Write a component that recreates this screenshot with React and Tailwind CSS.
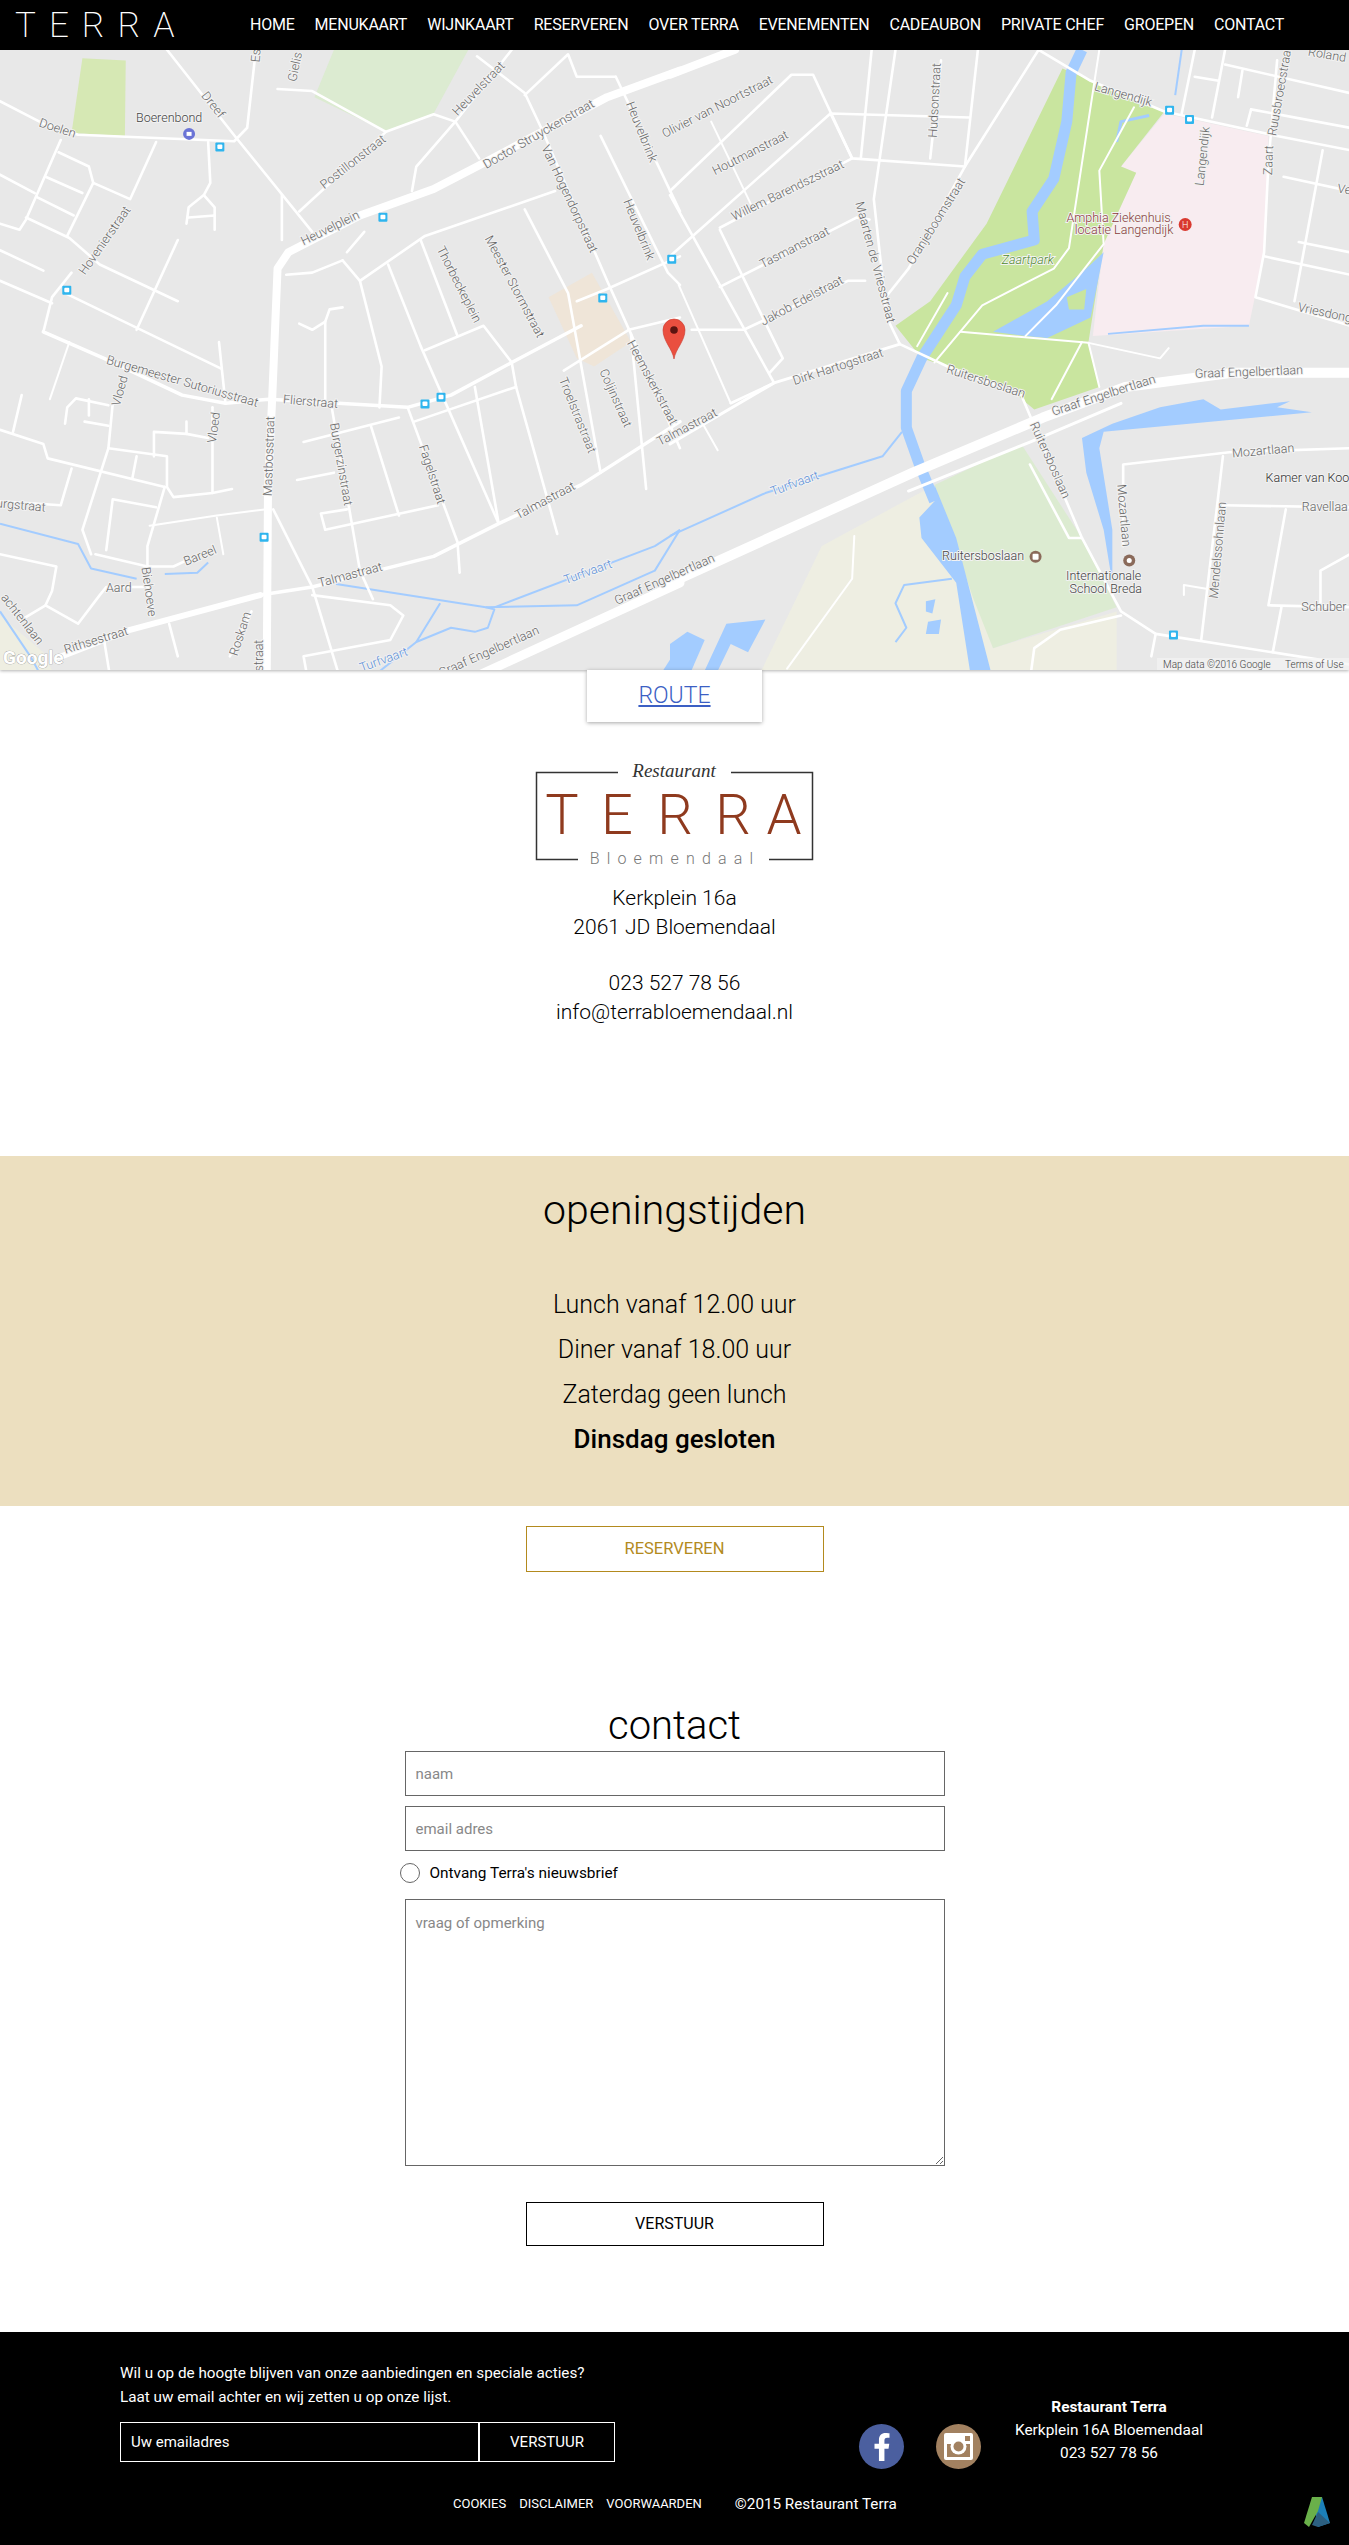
import { FaFacebookF } from "react-icons/fa";

const navItems = ["HOME", "MENUKAART", "WIJNKAART", "RESERVEREN", "OVER TERRA", "EVENEMENTEN", "CADEAUBON", "PRIVATE CHEF", "GROEPEN", "CONTACT"];

// map coordinates are read off two crops, converted to page pixels here
const LEFT = 0;
const RIGHT = 670;
const px = (off, x) => off + x / 2.306;
const py = (y) => y / 2.45 - 10;
const pts = (off, arr) => arr.map(([x, y]) => `${px(off, x)},${py(y)}`).join(" ");

const areas = [
  [LEFT, "#d6e8b4", [[190, 45], [290, 50], [288, 235], [165, 228]]],
  [LEFT, "#dcebd1", [[725, 140], [770, 24], [1080, 24], [1000, 180], [890, 225]]],
  [LEFT, "#efe5d8", [[1265, 630], [1365, 570], [1455, 740], [1370, 800], [1330, 780]]],
  [LEFT, "#eeeee2", [[0, 1410], [100, 1500], [130, 1568], [0, 1568]]],
  [LEFT, "#a3ccff", [[1515, 1568], [1568, 1480], [1568, 1568]]],
  [RIGHT, "#f8ecf0", [[1140, 180], [1380, 235], [1370, 520], [1335, 700], [975, 725], [1000, 500], [1075, 325], [1040, 310]]],
  [RIGHT, "#eeeee2", [[610, 1090], [745, 1490], [1030, 1400], [1030, 1568], [200, 1568], [350, 1240]]],
  [RIGHT, "#dcebd1", [[810, 990], [950, 1220], [1030, 1390], [745, 1490], [700, 1370], [610, 1090]]],
  [RIGHT, "#c9e59f", [[905, 70], [1140, 175], [1040, 310], [1075, 325], [1000, 500], [965, 740], [990, 850], [840, 905], [800, 870], [640, 800], [580, 780], [520, 700], [600, 640], [730, 450]]],
  [RIGHT, "#a3ccff", [[745, 715], [870, 640], [960, 560], [1000, 520], [970, 680], [870, 730], [820, 725]]],
  [RIGHT, "#c9e59f", [[915, 630], [960, 610], [955, 660], [920, 660]]],
  [RIGHT, "#a3ccff", [[950, 975], [1020, 940], [1130, 900], [1230, 880], [1270, 905], [1430, 885], [1400, 900], [1480, 912], [1000, 960], [990, 1000], [1020, 1200], [1020, 1330], [1000, 1200], [960, 1060]]],
  [RIGHT, "#a3ccff", [[610, 1090], [660, 1220], [745, 1568], [695, 1568], [660, 1330], [580, 1220], [575, 1170], [610, 1130]]],
  [RIGHT, "#a3ccff", [[70, 1568], [130, 1430], [220, 1420], [180, 1500], [140, 1480], [100, 1568]]],
  [RIGHT, "#a3ccff", [[0, 1480], [40, 1450], [80, 1470], [40, 1568], [0, 1568]]],
  [RIGHT, "#a3ccff", [[590, 1375], [612, 1370], [605, 1405], [590, 1400]]],
  [RIGHT, "#a3ccff", [[595, 1425], [625, 1420], [620, 1455], [590, 1455]]],
];

const water = [
  [LEFT, 2, [[0, 1185], [180, 1235], [210, 1295], [315, 1320]]],
  [LEFT, 2, [[380, 1308], [455, 1305], [480, 1280]]],
  [LEFT, 2, [[775, 1333], [1120, 1390], [1330, 1385], [1510, 1300], [1568, 1200]]],
  [LEFT, 2, [[1140, 1390], [1510, 1240], [1568, 1200]]],
  [LEFT, 2, [[1120, 1390], [1140, 1395], [1125, 1440], [1095, 1450], [1040, 1440], [960, 1475], [1015, 1380]]],
  [LEFT, 2, [[960, 1475], [850, 1568]]],
  [LEFT, 2, [[0, 1400], [70, 1510], [100, 1568]]],
  [RIGHT, 11, [[950, 24], [925, 80], [915, 200], [885, 340], [835, 420], [840, 490], [720, 525], [680, 580], [660, 650], [580, 780], [545, 860], [545, 950], [575, 1040], [610, 1130]]],
  [RIGHT, 2, [[0, 1215], [220, 1110], [490, 1020], [535, 960]]],
  [RIGHT, 2, [[1010, 720], [1230, 700], [1335, 700]]],
  [RIGHT, 3, [[1030, 250], [1040, 200], [1105, 185]]],
  [RIGHT, 2, [[1180, 24], [1165, 135]]],
  [RIGHT, 2, [[650, 1320], [540, 1335], [520, 1380], [545, 1440], [520, 1475]]],
];

const roads = [
  // big roads
  [LEFT, 8, [[615, 1568], [618, 1100], [628, 870], [640, 560], [665, 520], [830, 430], [1000, 365], [1100, 310], [1400, 140], [1568, 75]]],
  [LEFT, 6, [[130, 1515], [300, 1445], [600, 1360]]],
  [LEFT, 9, [[1080, 1568], [1568, 1330]]],
  [RIGHT, 10, [[0, 1330], [560, 1060], [860, 925], [1050, 850], [1300, 815], [1568, 815]]],
  [RIGHT, 3, [[550, 1105], [830, 985], [1040, 890]]],
  [RIGHT, 8, [[0, 85], [150, 24]]],
  // left crop
  [LEFT, 3.5, [[600, 1360], [720, 1340], [1000, 1265], [1150, 1185], [1340, 1090], [1568, 935]]],
  [LEFT, 3.5, [[100, 715], [240, 780], [420, 870], [520, 890], [620, 880], [780, 890], [940, 900], [1040, 870], [1180, 790], [1340, 700]]],
  [LEFT, 2.6, [[0, 150], [100, 205], [180, 232], [540, 248], [570, 215], [590, 24]]],
  [LEFT, 2.6, [[385, 24], [545, 240], [720, 470]]],
  [LEFT, 2.6, [[640, 120], [720, 125], [890, 225], [1000, 182], [1050, 200], [1105, 290]]],
  [LEFT, 2.6, [[1100, 40], [1210, 130], [1250, 220], [1400, 590], [1455, 720], [1568, 1000]]],
  [LEFT, 2.6, [[1455, 720], [1490, 1100]]],
  [LEFT, 2.6, [[1180, 24], [1050, 200], [960, 310], [950, 370]]],
  [LEFT, 2.6, [[1210, 135], [1310, 35], [1330, 90], [1420, 90]]],
  [LEFT, 2.6, [[1385, 235], [1540, 570], [1568, 600]]],
  [LEFT, 2.6, [[1420, 90], [1568, 420]]],
  [LEFT, 2.6, [[140, 245], [60, 440], [45, 465], [0, 450]]],
  [LEFT, 2.6, [[360, 250], [300, 390], [215, 350], [155, 480]]],
  [LEFT, 2.6, [[135, 275], [205, 310], [215, 350]]],
  [LEFT, 2.6, [[105, 335], [190, 375]]],
  [LEFT, 2.6, [[85, 385], [170, 430]]],
  [LEFT, 2.6, [[60, 435], [160, 485], [230, 550], [410, 640]]],
  [LEFT, 2.6, [[0, 330], [80, 375]]],
  [LEFT, 2.6, [[0, 515], [100, 565]]],
  [LEFT, 2.6, [[0, 590], [120, 645]]],
  [LEFT, 2.6, [[410, 490], [315, 710]]],
  [LEFT, 2.6, [[165, 570], [120, 630], [100, 715]]],
  [LEFT, 2.6, [[150, 620], [510, 805]]],
  [LEFT, 2.6, [[505, 740], [520, 890]]],
  [LEFT, 2.6, [[480, 250], [485, 350], [470, 380], [435, 410], [430, 450]]],
  [LEFT, 2.6, [[470, 380], [495, 410], [495, 465]]],
  [LEFT, 2.6, [[435, 435], [495, 430]]],
  [LEFT, 2.6, [[650, 380], [650, 490]]],
  [LEFT, 2.6, [[690, 420], [890, 225]]],
  [LEFT, 2.6, [[800, 520], [840, 470]]],
  [LEFT, 2.6, [[790, 540], [830, 590], [880, 800], [875, 900]]],
  [LEFT, 2.6, [[660, 575], [720, 570], [790, 540]]],
  [LEFT, 2.6, [[830, 590], [980, 480], [1280, 370]]],
  [LEFT, 2.6, [[970, 490], [1055, 725]]],
  [LEFT, 2.6, [[895, 550], [970, 750], [1150, 1185]]],
  [LEFT, 2.6, [[980, 760], [1115, 700], [1180, 790], [1190, 850], [1285, 1210]]],
  [LEFT, 2.6, [[1210, 415], [1310, 620], [1385, 1060]]],
  [LEFT, 2.6, [[690, 695], [720, 710], [750, 690], [750, 880]]],
  [LEFT, 2.6, [[750, 690], [760, 660], [790, 655]]],
  [LEFT, 2.6, [[1330, 640], [1400, 610], [1568, 530]]],
  [LEFT, 2.6, [[1300, 810], [1450, 710], [1568, 680]]],
  [LEFT, 2.6, [[1095, 850], [1150, 1185]]],
  [LEFT, 2.6, [[1190, 850], [955, 935]]],
  [LEFT, 2.6, [[940, 900], [1055, 1230], [1060, 1305]]],
  [LEFT, 2.6, [[700, 985], [920, 925]]],
  [LEFT, 2.6, [[855, 945], [920, 1165]]],
  [LEFT, 2.6, [[685, 1078], [770, 1060]]],
  [LEFT, 2.6, [[765, 900], [830, 1300], [860, 1370]]],
  [LEFT, 2.6, [[1010, 1140], [750, 1200], [740, 1160], [800, 1150]]],
  [LEFT, 2.6, [[50, 870], [30, 960]]],
  [LEFT, 2.6, [[0, 955], [100, 990], [110, 1025], [380, 1095]]],
  [LEFT, 2.6, [[165, 1050], [140, 1140], [0, 1130]]],
  [LEFT, 2, [[160, 740], [115, 880]]],
  [LEFT, 2.6, [[260, 890], [250, 1000], [190, 1200], [210, 1260]]],
  [LEFT, 2.6, [[250, 1000], [385, 1020], [385, 1095], [400, 1120], [490, 1110], [535, 1100]]],
  [LEFT, 2.6, [[490, 900], [490, 1110]]],
  [LEFT, 2.6, [[150, 940], [155, 900], [175, 878], [250, 895]]],
  [LEFT, 2.6, [[205, 880], [205, 920]]],
  [LEFT, 2.6, [[195, 935], [250, 945]]],
  [LEFT, 2.6, [[355, 1020], [355, 960], [430, 965], [480, 975]]],
  [LEFT, 2.6, [[430, 935], [430, 965]]],
  [LEFT, 2.6, [[315, 1020], [305, 1075]]],
  [LEFT, 2.6, [[245, 1250], [260, 1125], [360, 1145]]],
  [LEFT, 2.6, [[380, 1095], [340, 1240], [340, 1290]]],
  [LEFT, 2, [[345, 1190], [500, 1165], [610, 1150]]],
  [LEFT, 2, [[500, 1170], [515, 1260]]],
  [LEFT, 2.6, [[220, 1260], [340, 1290], [400, 1290], [440, 1270]]],
  [LEFT, 2.6, [[0, 1260], [130, 1290], [120, 1350], [105, 1385], [180, 1430], [230, 1360], [245, 1340], [330, 1340]]],
  [LEFT, 2.6, [[340, 1340], [355, 1410]]],
  [LEFT, 2.6, [[105, 1385], [50, 1420]]],
  [LEFT, 2.6, [[390, 1430], [410, 1510]]],
  [LEFT, 2.6, [[240, 1470], [255, 1568]]],
  [LEFT, 2.6, [[630, 1150], [720, 1340], [785, 1568]]],
  [LEFT, 2.6, [[720, 1360], [900, 1385], [930, 1410], [900, 1470], [700, 1510], [710, 1568]]],
  [LEFT, 2.6, [[530, 1510], [580, 1400]]],
  // right crop
  [RIGHT, 2.6, [[0, 370], [280, 85], [330, 85], [420, 290], [680, 310]]],
  [RIGHT, 2.6, [[0, 530], [370, 180], [690, 190]]],
  [RIGHT, 2.6, [[370, 180], [420, 290], [115, 460]]],
  [RIGHT, 2, [[95, 200], [190, 410]]],
  [RIGHT, 2.6, [[0, 380], [240, 840], [140, 890]]],
  [RIGHT, 2.6, [[115, 465], [260, 780], [230, 815]]],
  [RIGHT, 2.6, [[115, 605], [430, 435], [460, 440]]],
  [RIGHT, 2.6, [[50, 710], [170, 710], [410, 590], [450, 590]]],
  [RIGHT, 2, [[20, 600], [140, 890]]],
  [RIGHT, 3, [[0, 990], [240, 840], [530, 745]]],
  [RIGHT, 2, [[70, 930], [110, 1005]]],
  [RIGHT, 2.6, [[465, 24], [440, 290]]],
  [RIGHT, 2.6, [[520, 24], [470, 390], [500, 680], [530, 745], [640, 800], [810, 870], [850, 970], [950, 1220], [1040, 1400], [1120, 1455], [1568, 1530]]],
  [RIGHT, 2.6, [[710, 24], [680, 310], [550, 560], [490, 640]]],
  [RIGHT, 2.6, [[850, 24], [680, 310]]],
  [RIGHT, 2.6, [[625, 50], [600, 290]]],
  [RIGHT, 2.6, [[850, 24], [970, 100], [1140, 175], [1400, 235], [1568, 270]]],
  [RIGHT, 2, [[990, 24], [920, 510], [885, 560], [720, 650], [610, 790]]],
  [RIGHT, 2, [[670, 715], [965, 742], [990, 850]]],
  [RIGHT, 2, [[965, 742], [1130, 780], [1150, 755]]],
  [RIGHT, 2, [[1070, 165], [990, 320], [1000, 500], [890, 650], [820, 725]]],
  [RIGHT, 2, [[950, 740], [880, 880]]],
  [RIGHT, 2, [[640, 620], [570, 750]]],
  [RIGHT, 2.6, [[1280, 24], [1250, 190]]],
  [RIGHT, 2.6, [[1210, 24], [1180, 180]]],
  [RIGHT, 2.6, [[1280, 60], [1568, 130]]],
  [RIGHT, 2.6, [[1340, 170], [1330, 210]]],
  [RIGHT, 2.6, [[1340, 170], [1568, 215]]],
  [RIGHT, 2.6, [[1400, 50], [1380, 300], [1370, 520], [1350, 630], [1568, 700]]],
  [RIGHT, 2.6, [[1370, 530], [1568, 575]]],
  [RIGHT, 2.6, [[1505, 270], [1440, 640]]],
  [RIGHT, 2.6, [[1415, 335], [1568, 370]]],
  [RIGHT, 2.6, [[1450, 495], [1568, 520]]],
  [RIGHT, 2.6, [[1320, 75], [1310, 140]]],
  [RIGHT, 2.6, [[1210, 90], [1265, 100]]],
  [RIGHT, 2.6, [[1045, 1240], [1045, 1040], [1290, 1010], [1568, 1000]]],
  [RIGHT, 2.6, [[1275, 1020], [1225, 1470]]],
  [RIGHT, 2.6, [[1275, 1140], [1568, 1145]]],
  [RIGHT, 2.6, [[1420, 1150], [1380, 1385], [1568, 1390]]],
  [RIGHT, 2.6, [[1410, 1390], [1390, 1500]]],
  [RIGHT, 2.6, [[1500, 1385], [1500, 1300], [1568, 1260]]],
  [RIGHT, 2, [[1185, 1360], [1185, 1335], [1240, 1345]]],
  [RIGHT, 2.6, [[1040, 1410], [900, 1445], [840, 1490], [830, 1568]]],
  [RIGHT, 2, [[425, 1215], [420, 1320], [270, 1540]]],
  [RIGHT, 2.6, [[830, 1040], [920, 1220], [950, 1220]]],
  [RIGHT, 2.6, [[1120, 1455], [1110, 1510]]],
];

const labels = [
  [LEFT, "Doelen", 132, 218, 18],
  [LEFT, "Boerenbond", 390, 192, 0, "#444"],
  [LEFT, "Dreef", 490, 160, 52],
  [LEFT, "Gielis", 682, 66, -78],
  [LEFT, "Es", 592, 38, -85],
  [LEFT, "Heuvelstraat", 1105, 120, -46],
  [LEFT, "Postillonstraat", 815, 300, -38],
  [LEFT, "Doctor Struyckenstraat", 1243, 232, -30],
  [LEFT, "Heuvelplein", 762, 462, -26],
  [LEFT, "Hovenierstraat", 243, 492, -55],
  [LEFT, "Van Hogendorpstraat", 1312, 390, 65],
  [LEFT, "Heuvelbrink", 1478, 226, 68],
  [LEFT, "Heuvelbrink", 1472, 465, 68],
  [LEFT, "Thorbeckeplein", 1057, 600, 63],
  [LEFT, "Meester Stormstraat", 1185, 605, 62],
  [LEFT, "Heemskerkstraat", 1503, 840, 62],
  [LEFT, "Coljinstraat", 1418, 878, 66],
  [LEFT, "Troelstrastraat", 1330, 920, 68],
  [LEFT, "Burgemeester Sutoriusstraat", 420, 838, 16],
  [LEFT, "Flierstraat", 716, 888, 5],
  [LEFT, "Vloed", 278, 860, -75],
  [LEFT, "Vloed", 495, 950, -82],
  [LEFT, "Mastbosstraat", 622, 1020, -88],
  [LEFT, "Burgerzinstraat", 785, 1040, 80],
  [LEFT, "Fagelstraat", 995, 1065, 72],
  [LEFT, "Talmastraat", 1258, 1130, -28],
  [LEFT, "Talmastraat", 808, 1312, -15],
  [LEFT, "Bareel", 462, 1265, -22],
  [LEFT, "Aard", 274, 1345, 0],
  [LEFT, "Biehoeve", 342, 1352, 82],
  [LEFT, "urgstraat", 48, 1142, 5],
  [LEFT, "achtenlaan", 50, 1420, 52],
  [LEFT, "Rithsestraat", 222, 1472, -17],
  [LEFT, "Roskam", 556, 1455, -72],
  [LEFT, "straat", 600, 1508, -90],
  [LEFT, "Turfvaart", 1356, 1305, -20, "#5b8fd8"],
  [LEFT, "Turfvaart", 885, 1520, -20, "#5b8fd8"],
  [LEFT, "Graaf Engelbertlaan", 1128, 1500, -24],
  [LEFT, "Graaf Engelbertlaan", 1533, 1323, -24],
  [RIGHT, "Olivier van Noortstraat", 110, 165, -27],
  [RIGHT, "Houtmanstraat", 186, 278, -27],
  [RIGHT, "Willem Barendszstraat", 272, 370, -26],
  [RIGHT, "Tasmanstraat", 288, 510, -27],
  [RIGHT, "Jakob Edelstraat", 305, 640, -28],
  [RIGHT, "Dirk Hartogstraat", 388, 802, -18],
  [RIGHT, "Talmastraat", 40, 950, -28],
  [RIGHT, "Hudsonstraat", 612, 148, -87],
  [RIGHT, "Maarten de Vriesstraat", 472, 545, 75],
  [RIGHT, "Oranjeboomstraat", 615, 445, -58],
  [RIGHT, "Langendijk", 1045, 135, 16],
  [RIGHT, "Langendijk", 1230, 285, -84],
  [RIGHT, "Ruusbroecstraat", 1408, 125, -80],
  [RIGHT, "Roland", 1515, 38, 10],
  [RIGHT, "Zaart", 1382, 295, -88],
  [RIGHT, "Ve", 1555, 368, 8],
  [RIGHT, "Amphia Ziekenhuis,", 1037, 437, 0, "#8b3a3a"],
  [RIGHT, "locatie Langendijk", 1047, 468, 0, "#8b3a3a"],
  [RIGHT, "Zaartpark", 825, 540, 0, "#4f8a2d", "italic"],
  [RIGHT, "Vriesdong", 1510, 670, 12],
  [RIGHT, "Ruitersboslaan", 728, 838, 18],
  [RIGHT, "Graaf Engelbertlaan", 1000, 872, -18],
  [RIGHT, "Graaf Engelbertlaan", 1335, 815, -2],
  [RIGHT, "Ruitersboslaan", 875, 1030, 66],
  [RIGHT, "Mozartlaan", 1368, 1008, -5],
  [RIGHT, "Mozartlaan", 1045, 1165, 85],
  [RIGHT, "Kamer van Koo", 1470, 1076, 0, "#333"],
  [RIGHT, "Ravellaa", 1510, 1145, 0],
  [RIGHT, "Mendelssohnlaan", 1265, 1250, -85],
  [RIGHT, "Schuber", 1508, 1390, 0],
  [RIGHT, "Turfvaart", 288, 1088, -20, "#5b8fd8"],
  [RIGHT, "Ruitersboslaan", 722, 1267, 0, "#444"],
  [RIGHT, "Internationale", 1000, 1314, 0, "#444"],
  [RIGHT, "School Breda", 1005, 1346, 0, "#444"],
];

const stops = [
  [LEFT, 507, 262], [LEFT, 883, 434], [LEFT, 154, 613], [LEFT, 1390, 632], [LEFT, 1549, 537],
  [LEFT, 980, 892], [LEFT, 1017, 875], [LEFT, 609, 1218],
  [RIGHT, 1152, 172], [RIGHT, 1198, 195], [RIGHT, 1161, 1458],
];

function TerraMap() {
  return (
    <svg className="block h-[620px] w-full" width="1349" height="620" viewBox="0 0 1349 620">
      <rect width="1349" height="620" fill="#e8e8e8" />
      {areas.map(([off, fill, p], i) => (
        <polygon key={i} points={pts(off, p)} fill={fill} />
      ))}
      {water.map(([off, w, p], i) => (
        <polyline key={i} points={pts(off, p)} fill="none" stroke="#a3ccff" strokeWidth={w} strokeLinejoin="round" />
      ))}
      {roads.map(([off, w, p], i) => (
        <polyline key={i} points={pts(off, p)} fill="none" stroke="#fff" strokeWidth={w} strokeLinejoin="round" strokeLinecap="round" />
      ))}
      {stops.map(([off, x, y], i) => (
        <g key={i} transform={`translate(${px(off, x)},${py(y)})`}>
          <rect x="-4.5" y="-4.5" width="9" height="9" rx="1" fill="#2fb5ee" />
          <rect x="-2.5" y="-2.5" width="5" height="4.5" rx="1" fill="#fff" />
        </g>
      ))}
      <g fontFamily="Roboto, sans-serif" fontSize="12.5" textAnchor="middle" dominantBaseline="middle">
        {labels.map(([off, text, x, y, rot, fill, style], i) => (
          <text
            key={i}
            transform={`translate(${px(off, x)},${py(y)}) rotate(${rot})`}
            fill={fill || "#666"}
            fontStyle={style}
            stroke="#f2f2f2"
            strokeWidth="2"
            paintOrder="stroke"
          >
            {text}
          </text>
        ))}
      </g>
      {/* poi markers */}
      <circle cx={px(LEFT, 436)} cy={py(230)} r="6" fill="#6b74d6" />
      <rect x={px(LEFT, 436) - 2.5} y={py(230) - 2} width="5" height="4" fill="#fff" />
      <circle cx={px(RIGHT, 1188)} cy={py(452)} r="6.5" fill="#d9392f" />
      <text x={px(RIGHT, 1188)} y={py(452) + 3.5} fontFamily="Roboto, sans-serif" fontSize="9" fill="#fff" textAnchor="middle">H</text>
      <circle cx={px(RIGHT, 843)} cy={py(1266)} r="6" fill="#8a6a5a" />
      <rect x={px(RIGHT, 843) - 3} y={py(1266) - 3} width="6" height="6" rx="1" fill="#fff" />
      <circle cx={px(RIGHT, 1059)} cy={py(1275)} r="6" fill="#8a6a5a" />
      <circle cx={px(RIGHT, 1059)} cy={py(1275)} r="2.5" fill="#fff" />
      {/* marker pin */}
      <g transform="translate(674,269)">
        <path d="M0 40C-1.5 30-11 22-11 11A11 11 0 0 1 11 11C11 22 1.5 30 0 40Z" fill="#ea4f3f" stroke="#c9382c" strokeWidth="0.6" />
        <circle cx="0" cy="11" r="3.8" fill="#5b1410" />
      </g>
      <text x="3" y="614" fontFamily="Roboto, sans-serif" fontWeight="700" fontSize="19" fill="#fff" stroke="#9a9a9a" strokeWidth="0.7" paintOrder="stroke">Google</text>
      <rect x="1157" y="608" width="192" height="12" fill="#f4f4f4" opacity="0.65" />
      <text x="1163" y="618" fontFamily="Roboto, sans-serif" fontSize="10" fill="#444">Map data ©2016 Google</text>
      <text x="1285" y="618" fontFamily="Roboto, sans-serif" fontSize="10" fill="#444">Terms of Use</text>
    </svg>
  );
}

function TerraLogo() {
  return (
    <svg className="mx-auto block" width="281" height="106" viewBox="0 0 281 106">
      <g fill="none" stroke="#333" strokeWidth="1.5">
        <path d="M84 10.5H2.5V97.5H44" />
        <path d="M197 10.5H278.5V97.5H235" />
      </g>
      <text x="140" y="15" textAnchor="middle" fontFamily="'Liberation Serif', serif" fontStyle="italic" fontSize="19" fill="#333">Restaurant</text>
      <g fontFamily="Roboto, sans-serif" fontWeight="300" fontSize="56" fill="#8f3a1e" textAnchor="middle">
        <text x="28" y="72">T</text>
        <text x="83" y="72">E</text>
        <text x="141" y="72">R</text>
        <text x="199" y="72">R</text>
        <text x="250" y="72">A</text>
      </g>
      <text x="141" y="102" textAnchor="middle" fontFamily="Roboto, sans-serif" fontWeight="300" fontSize="16" letterSpacing="7.2" fill="#777">Bloemendaal</text>
    </svg>
  );
}

function InstagramIcon() {
  return (
    <svg width="45" height="45" viewBox="0 0 45 45">
      <circle cx="22.5" cy="22.5" r="22.5" fill="#a28160" />
      <path d="M10 9h25a2 2 0 0 1 2 2v23a2 2 0 0 1-2 2H10a2 2 0 0 1-2-2V11a2 2 0 0 1 2-2Z" fill="#fff" />
      <rect x="11" y="20" width="23" height="13" fill="#a28160" />
      <circle cx="22.5" cy="22.5" r="8" fill="#fff" />
      <circle cx="22.5" cy="22.5" r="5" fill="#a28160" />
      <rect x="29" y="12" width="5" height="5" fill="#a28160" />
    </svg>
  );
}

export default function App() {
  return (
    <div className="bg-white font-['Roboto',sans-serif] font-light text-black">
      <header className="flex h-[50px] items-center bg-black text-white">
        <div className="w-[250px] pl-[15px] text-[35px] font-extralight leading-none tracking-[13px]">TERRA</div>
        <nav className="flex gap-5 text-base font-normal tracking-[-0.22px]">
          {navItems.map((item) => (
            <a key={item} className="whitespace-nowrap">{item}</a>
          ))}
        </nav>
      </header>

      <div className="shadow-[0_1px_3px_rgba(0,0,0,0.3)]">
        <TerraMap />
      </div>

      <div className="relative mx-auto flex h-[52px] w-[175px] items-center justify-center bg-white shadow-[0_1px_4px_rgba(0,0,0,0.35)]">
        <a className="text-[23px] text-[#3c5fc4] underline">ROUTE</a>
      </div>

      <div className="mt-10">
        <TerraLogo />
      </div>

      <div className="mt-4 text-center text-[21px] leading-[28.6px]">
        <p>Kerkplein 16a</p>
        <p>2061 JD Bloemendaal</p>
        <p className="mt-[28px]">023 527 78 56</p>
        <p>info@terrabloemendaal.nl</p>
      </div>

      <section className="mt-[130px] h-[350px] bg-[#ecdfbf] pt-[29px] text-center">
        <h2 className="text-[41px] font-light leading-[50px]">openingstijden</h2>
        <div className="mt-[47px] text-[25px] leading-[45px]">
          <p>Lunch vanaf 12.00 uur</p>
          <p>Diner vanaf 18.00 uur</p>
          <p>Zaterdag geen lunch</p>
          <p className="text-[26px] font-medium">Dinsdag gesloten</p>
        </div>
      </section>

      <button className="mx-auto mt-5 block h-[46px] w-[298px] border border-[#b38a1e] text-[16.5px] font-normal text-[#b38a1e]">RESERVEREN</button>

      <section className="mt-[129px]">
        <h2 className="text-center text-[40px] font-light leading-[50px]">contact</h2>
        <form className="mx-auto w-[540px]">
          <input className="block h-[45px] w-full border border-[#666] px-[10px] text-[15px] font-normal outline-none placeholder:text-[#888]" placeholder="naam" />
          <input className="mt-[10px] block h-[45px] w-full border border-[#666] px-[10px] text-[15px] font-normal outline-none placeholder:text-[#888]" placeholder="email adres" />
          <label className="mt-3 -ml-[5px] flex h-5 items-center gap-[10px] text-[15.4px] font-normal">
            <span className="size-5 rounded-full border border-[#666]" />
            Ontvang Terra's nieuwsbrief
          </label>
          <textarea className="mt-4 block h-[267px] w-full border border-[#666] px-[10px] py-[12px] text-[15px] font-normal outline-none placeholder:text-[#888]" placeholder="vraag of opmerking" />
          <button type="button" className="mx-auto mt-9 block h-[44px] w-[298px] border border-black text-base font-normal">VERSTUUR</button>
        </form>
      </section>

      <footer className="mt-[86px] h-[213px] bg-black text-white">
        <div className="flex h-[148px] pl-[120px]">
          <div className="w-[495px] pt-[29px]">
            <p className="text-[15.25px] font-normal leading-6">Wil u op de hoogte blijven van onze aanbiedingen en speciale acties?</p>
            <p className="text-[15.25px] font-normal leading-6">Laat uw email achter en wij zetten u op onze lijst.</p>
            <div className="mt-[13px] flex h-10 border border-white text-[15px]">
              <div className="flex w-[359px] items-center border-r-2 border-white pl-[10px] font-normal">Uw emailadres</div>
              <div className="flex flex-1 items-center justify-center font-normal">VERSTUUR</div>
            </div>
          </div>
          <div className="ml-[244px] mt-[92px] flex h-[45px] gap-8">
            <span className="flex size-[45px] items-center justify-center rounded-full bg-[#4b5f9f] text-[28px]">
              <FaFacebookF />
            </span>
            <InstagramIcon />
          </div>
          <div className="ml-[30px] w-[196px] pt-[64px] text-center text-[15.4px] leading-[23px]">
            <p className="font-bold">Restaurant Terra</p>
            <p className="whitespace-nowrap font-normal">Kerkplein 16A Bloemendaal</p>
            <p className="font-normal">023 527 78 56</p>
          </div>
        </div>
        <div className="flex items-start pl-[453px] pr-[19px] pt-[15px] text-[13px] font-normal leading-[18px]">
          <a>COOKIES</a>
          <a className="ml-[13px]">DISCLAIMER</a>
          <a className="ml-[13px]">VOORWAARDEN</a>
          <span className="ml-[33px] text-[15.25px]">©2015 Restaurant Terra</span>
          <svg className="ml-auto mt-[2px]" width="26" height="30" viewBox="0 0 26 30">
            <path d="M8 0H18L26 26L14 30Z" fill="#1c7fb8" />
            <path d="M14 15L26 26L14 30L8 28Z" fill="#2c5f80" />
            <path d="M8 0H18L14 14L5 30L0 26Z" fill="#6ab04a" />
          </svg>
        </div>
      </footer>
    </div>
  );
}
